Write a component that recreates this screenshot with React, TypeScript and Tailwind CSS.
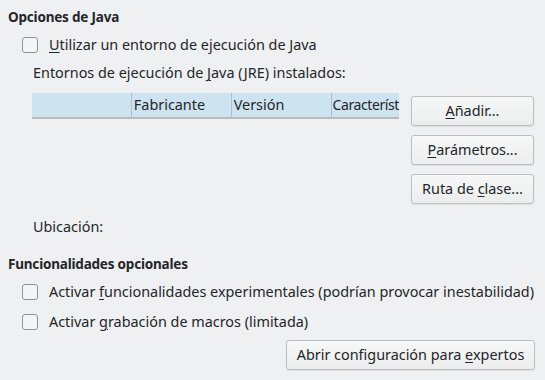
import React from 'react';

const U: React.FC<{ children: React.ReactNode }> = ({ children }) => (
  <span className="underline decoration-1 underline-offset-2">{children}</span>
);

const CheckRow: React.FC<{ children: React.ReactNode }> = ({ children }) => (
  <div className="flex items-center h-[18px] pl-[14px]">
    <span className="w-4 h-4 rounded-[3px] border border-[#8f9296] bg-[#f4f5f6] shrink-0" />
    <span className="ml-[11px] whitespace-nowrap">{children}</span>
  </div>
);

const Btn: React.FC<{ children: React.ReactNode; className?: string }> = ({ children, className }) => (
  <button
    className={
      'h-[30px] rounded-[3px] border border-[#bcbebf] bg-gradient-to-b from-[#f6f7f7] to-[#eceded] text-[#232629] flex items-center justify-center shadow-[0_1px_1px_rgba(0,0,0,0.08)] ' +
      (className ?? '')
    }
  >
    <span className="whitespace-nowrap">{children}</span>
  </button>
);

export default function App() {
  const columns = ['', 'Fabricante', 'Versión', 'Característ'];

  return (
    <div className="w-[545px] h-[380px] bg-[#eff0f1] text-[#232629] text-[14.4px] leading-[18px] font-['Noto_Sans',sans-serif] pl-2 pt-2 overflow-hidden">
      <div className="font-bold text-[13.5px] tracking-[-0.2px]">Opciones de Java</div>

      <div className="mt-[10px]">
        <CheckRow>
          <U>U</U>tilizar un entorno de ejecución de Java
        </CheckRow>
      </div>

      <div className="mt-[10px] pl-[25px]">
        Entornos de ejecución de <U>J</U>ava (JRE) instalados:
      </div>

      <div className="flex mt-[11px] pl-6">
        <div className="w-[367px] h-[26px] bg-[#cde3ef] border-b-2 border-[#b9bcbf] flex">
          {columns.map((c, i) => (
            <div
              key={i}
              className={
                'h-full flex items-center whitespace-nowrap ' +
                (i === 0
                  ? 'w-[99px]'
                  : i === 3
                  ? 'flex-1 border-l border-[#a9c3d2] pl-[1px] text-[14px] tracking-[-0.4px]'
                  : 'w-[100px] border-l border-[#a9c3d2] pl-[2px]')
              }
            >
              {c}
            </div>
          ))}
        </div>
        <div className="ml-3 mt-[3px] flex flex-col gap-[9px]">
          <Btn className="w-[123px]">
            <U>A</U>ñadir...
          </Btn>
          <Btn className="w-[123px]">
            <U>P</U>arámetros...
          </Btn>
          <Btn className="w-[123px]">
            Ruta de <U>c</U>lase...
          </Btn>
        </div>
      </div>

      <div className="mt-[14px] pl-[25px]">Ubicación:</div>

      <div className="mt-[19px] font-bold text-[13.5px] tracking-[-0.2px]">Funcionalidades opcionales</div>

      <div className="mt-[10px] flex flex-col gap-3">
        <CheckRow>
          Activar <U>f</U>uncionalidades experimentales (podrían provocar inestabilidad)
        </CheckRow>
        <CheckRow>
          Activar <U>g</U>rabación de macros (limitada)
        </CheckRow>
      </div>

      <div className="flex justify-end pr-[10px] mt-[9px]">
        <Btn className="w-[249px]">
          Abrir configuración para <U>e</U>xpertos
        </Btn>
      </div>
    </div>
  );
}
